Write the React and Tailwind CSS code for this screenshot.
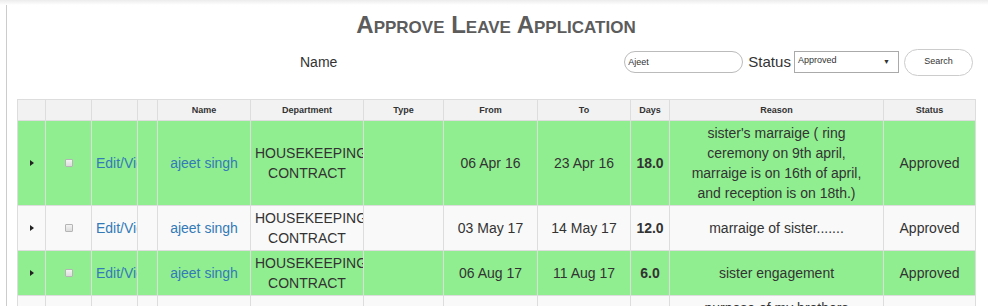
import React from "react";

const cols = [28, 46, 46, 20, 93, 113, 80, 94, 93, 39, 214, 92];
const heads = ["", "", "", "", "Name", "Department", "Type", "From", "To", "Days", "Reason", "Status"];

const rows = [
  {
    green: true,
    from: "06 Apr 16",
    to: "23 Apr 16",
    days: "18.0",
    reason: "sister's marraige ( ring ceremony on 9th april, marraige is on 16th of april, and reception is on 18th.)",
    status: "Approved",
  },
  { green: false, from: "03 May 17", to: "14 May 17", days: "12.0", reason: "marraige of sister.......", status: "Approved" },
  { green: true, from: "06 Aug 17", to: "11 Aug 17", days: "6.0", reason: "sister engagement", status: "Approved" },
  {
    green: false,
    from: "20 Nov 17",
    to: "27 Nov 17",
    days: "8.0",
    reason: "purpose of my brothers marraige function at my native place with family",
    status: "Approved",
  },
];

function Arrow() {
  return (
    <svg width="4" height="6" viewBox="0 0 4 6" className="mx-auto block">
      <path d="M0 0 L4 3 L0 6 Z" fill="#222" />
    </svg>
  );
}

function Check() {
  return (
    <span className="mx-auto block h-[8px] w-[8px] rounded-[1px] border border-[#b5b5b5] bg-gradient-to-b from-[#f4f4f4] to-[#dcdcdc]" />
  );
}

export default function App() {
  const td = "border border-[#dddddd] px-[4px] py-[2px] align-middle overflow-hidden";
  return (
    <div className="h-[306px] w-[988px] overflow-hidden bg-white font-['Liberation_Sans',Arial,sans-serif] text-[#333]">
      <div className="h-[5px] bg-gradient-to-b from-[#ececec] to-white" />
      <div className="ml-[6px] h-full border-l border-[#cccccc] pl-[10px]">
        {/* Title */}
        <h1 className="pr-[13px] pt-[6px] text-center text-[24px] font-bold leading-[28px] text-[#5c5c5c] [font-variant:small-caps]">
          Approve Leave Application
        </h1>

        {/* Filters */}
        <div className="mt-[9px] flex h-[28px] items-center">
          <span className="ml-[283px] text-[14px]">Name</span>
          <input
            readOnly
            value="Ajeet"
            className="ml-[287px] h-[22px] w-[119px] rounded-full border border-[#bbbbbb] px-[3px] text-[9px] text-[#333] outline-none"
          />
          <span className="ml-[5px] text-[15px]">Status</span>
          <div className="ml-[3px] flex h-[22px] w-[105px] items-center justify-between border border-[#aaaaaa] pl-[3px] pr-[8px] text-[9px]">
            <span className="-mt-[3px]">Approved</span>
            <span className="text-[7px]">▼</span>
          </div>
          <button className="ml-[5px] h-[27px] w-[69px] rounded-full border border-[#cccccc] bg-white text-[9px] text-[#333]">
            Search
          </button>
        </div>

        {/* Table */}
        <table className="mt-[23px] w-[958px] table-fixed border-collapse text-center text-[14px] leading-[20px]">
          <colgroup>
            {cols.map((w, i) => (
              <col key={i} style={{ width: w }} />
            ))}
          </colgroup>
          <thead>
            <tr className="h-[21px] bg-[#f2f2f2]">
              {heads.map((h, i) => (
                <th key={i} className="border border-[#dddddd] px-[2px] text-[9px] font-bold leading-[19px] text-[#333]">
                  {h}
                </th>
              ))}
            </tr>
          </thead>
          <tbody>
            {rows.map((r, i) => (
              <tr key={i} className={r.green ? "bg-[#90ee90]" : "bg-[#f9f9f9]"}>
                <td className={td}>
                  <Arrow />
                </td>
                <td className={td}>
                  <Check />
                </td>
                <td className={`${td} whitespace-nowrap text-left text-[#337ab7]`}>Edit/View</td>
                <td className={td}></td>
                <td className={`${td} text-[#337ab7]`}>ajeet singh</td>
                <td className={td}>HOUSEKEEPING CONTRACT</td>
                <td className={td}></td>
                <td className={td}>{r.from}</td>
                <td className={td}>{r.to}</td>
                <td className={`${td} font-bold`}>{r.days}</td>
                <td className={`${td} px-[12px]`}>{r.reason}</td>
                <td className={td}>{r.status}</td>
              </tr>
            ))}
          </tbody>
        </table>
      </div>
    </div>
  );
}
